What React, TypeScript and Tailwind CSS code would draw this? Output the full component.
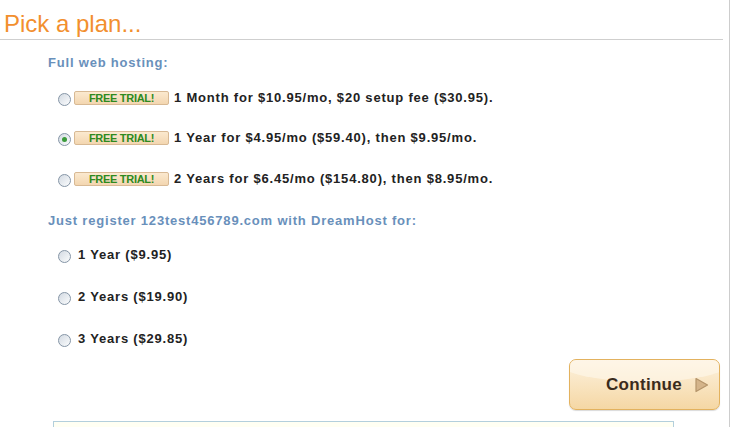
function Radio({ checked = false }: { checked?: boolean }) {
  return (
    <span className="mt-[3px] w-[13px] h-[13px] shrink-0 rounded-full border border-[#8595a6] bg-gradient-to-br from-[#d3dae2] to-[#fbfcfd] flex items-center justify-center">
      {checked && <span className="w-[5px] h-[5px] rounded-full bg-[#3a9a3a]" />}
    </span>
  );
}

function Badge() {
  return (
    <span className="w-[95px] h-[14px] shrink-0 rounded-[2px] border border-[#d8b994] bg-gradient-to-b from-[#fbe9cf] to-[#f3d6b0] flex items-center justify-center text-[11px] leading-none font-bold text-[#2d8a1e] tracking-[-0.3px]">
      FREE TRIAL!
    </span>
  );
}

const hosting = [
  { text: "1 Month for $10.95/mo, $20 setup fee ($30.95).", h: "h-[40px]" },
  { text: "1 Year for $4.95/mo ($59.40), then $9.95/mo.", h: "h-[40px]", checked: true },
  { text: "2 Years for $6.45/mo ($154.80), then $8.95/mo.", h: "h-[42px]" },
];

const domain = [
  { text: "1 Year ($9.95)", h: "h-[42px]" },
  { text: "2 Years ($19.90)", h: "h-[42px]" },
  { text: "3 Years ($29.85)", h: "h-[41px]" },
];

export default function App() {
  return (
    <div className="w-[732px] h-[427px] overflow-hidden bg-white font-['Liberation_Sans',Arial,sans-serif]">
      <div className="w-[730px] h-[427px] border-r border-[#cdcdcd]">
        {/* Title */}
        <div className="w-[723px] h-[40px] border-b border-[#cfcfcf] pl-[4px] pt-[10px]">
          <h1 className="text-[24px] leading-[27px] text-[#f28f2e]">Pick a plan...</h1>
        </div>

        <div className="pl-[48px]">
          <div className="mt-[15px] h-[16px] leading-[16px] text-[13px] font-bold tracking-[0.8px] text-[#6990bb]">
            Full web hosting:
          </div>
          <div className="mt-[7px] pl-[10px]">
            {hosting.map((row) => (
              <div key={row.text} className={`${row.h} flex items-center`}>
                <Radio checked={row.checked} />
                <span className="ml-[3px]">
                  <Badge />
                </span>
                <span className="ml-[5px] text-[13px] font-bold tracking-[0.8px] text-[#222]">
                  {row.text}
                </span>
              </div>
            ))}
          </div>

          <div className="mt-[13px] h-[16px] leading-[16px] text-[13px] font-bold tracking-[0.8px] text-[#6990bb]">
            Just register 123test456789.com with DreamHost for:
          </div>
          <div className="mt-[5px] pl-[10px]">
            {domain.map((row) => (
              <div key={row.text} className={`${row.h} flex items-center gap-[7px]`}>
                <Radio />
                <span className="text-[13px] font-bold tracking-[0.8px] text-[#222]">{row.text}</span>
              </div>
            ))}
          </div>
        </div>

        {/* Continue */}
        <div className="flex justify-end pr-[9px]">
          <button className="relative w-[151px] h-[51px] rounded-[7px] border border-[#e3b25e] bg-gradient-to-b from-[#fdf2de] to-[#f5d7a4] shadow-[0_1px_1px_rgba(0,0,0,0.15)] overflow-hidden flex items-center pl-[36px]">
            <span className="absolute left-[-20px] top-[-30px] w-[190px] h-[52px] rounded-[50%] bg-[#fff8ec] opacity-60" />
            <span className="relative text-[17px] font-bold text-[#3a2b1c] tracking-[0.3px]">Continue</span>
            <svg className="relative ml-[12px]" width="15" height="16" viewBox="0 0 15 16">
              <path d="M2 1.5 L13.5 8 L2 14.5 Z" fill="#d4b48a" stroke="#b4946a" strokeWidth="1.2" strokeLinejoin="round" />
            </svg>
          </button>
        </div>

        <div className="mt-[11px] ml-[53px] w-[621px] h-[40px] border border-[#b3cfdc] bg-[#fffff3]" />
      </div>
    </div>
  );
}
